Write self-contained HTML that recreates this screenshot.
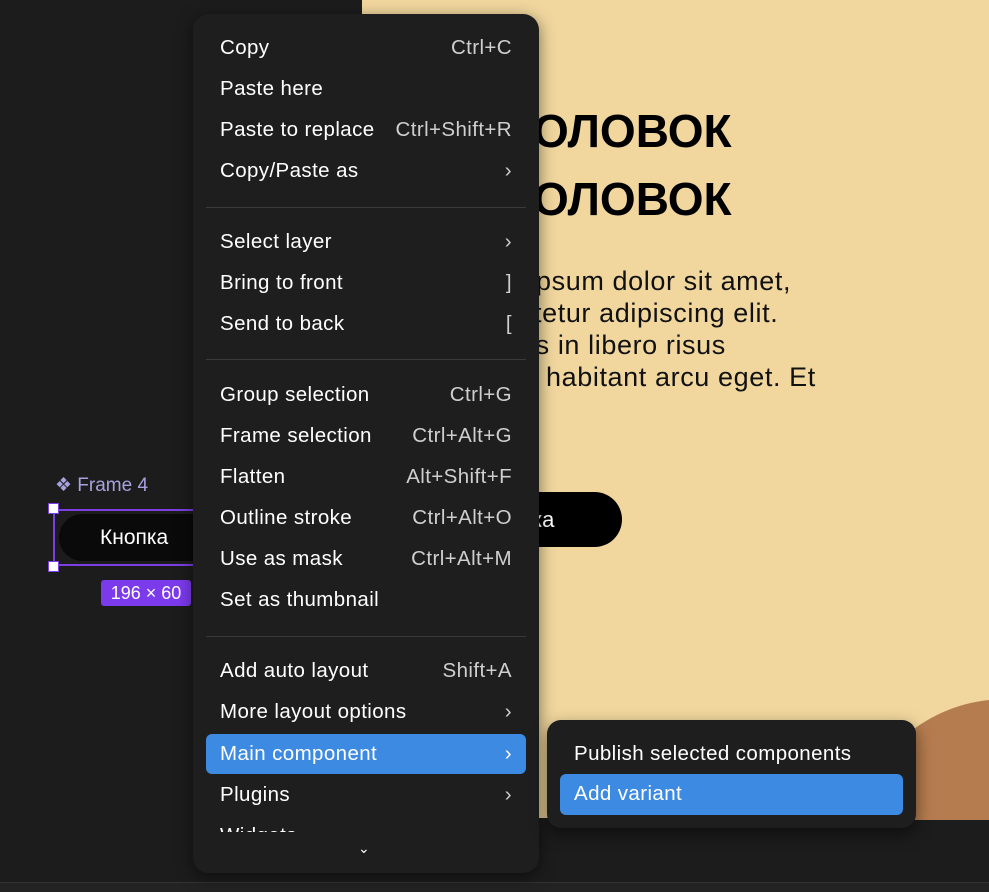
<!DOCTYPE html>
<html><head><meta charset="utf-8"><style>
*{margin:0;padding:0;box-sizing:border-box}
body{width:989px;height:892px;overflow:hidden;background:#1c1c1c;font-family:"Liberation Sans",sans-serif;position:relative}
.abs{position:absolute}
#beige{left:362px;top:0;width:627px;height:818px;background:#f1d79e}
.h{font-weight:bold;font-size:46px;color:#000;left:533px}
.b{font-size:27px;color:#111;white-space:nowrap;letter-spacing:0.6px}
#menu{left:193px;top:14px;width:346px;height:859px;background:#1e1e1e;border-radius:16px;box-shadow:0 4px 16px rgba(0,0,0,.5);overflow:hidden}
.it{position:absolute;left:13px;width:320px;height:40px;color:#fff;font-size:20.5px;line-height:40px;padding-left:14px;letter-spacing:0.4px;white-space:nowrap}
.it .k{position:absolute;right:14px;top:0;color:#cfcfcf}
.sep{position:absolute;left:13px;width:320px;height:1px;background:#3a3a3a}
.sel{background:#3d8ae2;border-radius:6px}
#sub{left:547px;top:720px;width:369px;height:108px;background:#1e1e1e;border-radius:14px;box-shadow:0 6px 16px rgba(0,0,0,.5)}
</style></head><body>
<div id="beige" class="abs"></div>
<svg class="abs" style="left:860px;top:680px" width="129" height="140"><path d="M40 60 Q80 25 129 20 L129 140 L20 140 Z" fill="#b57c4f"/></svg>
<div class="abs h" style="top:104px">ОЛОВОК</div>
<div class="abs h" style="top:172px">ОЛОВОК</div>
<div class="abs b" style="left:536px;top:266px">psum dolor sit amet,</div>
<div class="abs b" style="left:534px;top:298px">tetur adipiscing elit.</div>
<div class="abs b" style="left:520px;top:330px">us in libero risus</div>
<div class="abs b" style="left:546px;top:362px">habitant arcu eget. Et</div>
<div class="abs" style="left:470px;top:492px;width:152px;height:55px;background:#000;border-radius:28px;color:#fff;font-size:22px;line-height:55px;padding-left:62px">ка</div>
<div class="abs" style="left:0;top:882px;width:989px;height:10px;background:#232323;border-top:1px solid #333"></div>

<div class="abs" style="left:55px;top:474px;color:#a7a2de;font-size:19px">❖ Frame 4</div>
<div class="abs" style="left:53px;top:509px;width:150px;height:57px;border:2px solid #7b3fe4;background:#1c1c1c">
 <div class="abs" style="left:4px;top:3px;width:200px;height:47px;background:#0a0a0a;border-radius:24px"></div>
 <div class="abs" style="left:45px;top:15px;color:#fff;font-size:21px">Кнопка</div>
</div>
<div class="abs" style="left:48px;top:503px;width:11px;height:11px;background:#fff;border:1px solid #7b3fe4"></div>
<div class="abs" style="left:48px;top:561px;width:11px;height:11px;background:#fff;border:1px solid #7b3fe4"></div>
<div class="abs" style="left:101px;top:580px;width:90px;height:26px;background:#7c3aed;border-radius:3px;color:#fff;font-size:18px;line-height:26px;text-align:center">196 × 60</div>

<div id="menu" class="abs">
<div class="it" style="top:14px">Copy<span class="k">Ctrl+C</span></div>
<div class="it" style="top:55px">Paste here</div>
<div class="it" style="top:96px">Paste to replace<span class="k">Ctrl+Shift+R</span></div>
<div class="it" style="top:137px">Copy/Paste as<span class="k">›</span></div>
<div class="sep" style="top:193px"></div>
<div class="it" style="top:208px">Select layer<span class="k">›</span></div>
<div class="it" style="top:249px">Bring to front<span class="k">]</span></div>
<div class="it" style="top:290px">Send to back<span class="k">[</span></div>
<div class="sep" style="top:345px"></div>
<div class="it" style="top:361px">Group selection<span class="k">Ctrl+G</span></div>
<div class="it" style="top:402px">Frame selection<span class="k">Ctrl+Alt+G</span></div>
<div class="it" style="top:443px">Flatten<span class="k">Alt+Shift+F</span></div>
<div class="it" style="top:484px">Outline stroke<span class="k">Ctrl+Alt+O</span></div>
<div class="it" style="top:525px">Use as mask<span class="k">Ctrl+Alt+M</span></div>
<div class="it" style="top:566px">Set as thumbnail</div>
<div class="sep" style="top:622px"></div>
<div class="it" style="top:637px">Add auto layout<span class="k">Shift+A</span></div>
<div class="it" style="top:678px">More layout options<span class="k">›</span></div>
<div class="it sel" style="top:720px">Main component<span class="k" style="color:#fff">›</span></div>
<div class="it" style="top:761px">Plugins<span class="k">›</span></div>
<div class="it" style="top:802px;height:22px;overflow:hidden">Widgets<span class="k">›</span></div>
<div class="abs" style="left:0;top:818px;width:346px;height:41px;background:#1e1e1e"></div>
<div class="abs" style="left:165px;top:826px;color:#fff;font-size:14px">⌄</div>
</div>

<div id="sub" class="abs">
<div class="it" style="top:14px;width:343px">Publish selected components</div>
<div class="it sel" style="top:54px;width:343px;height:41px">Add variant</div>
</div>
</body></html>
